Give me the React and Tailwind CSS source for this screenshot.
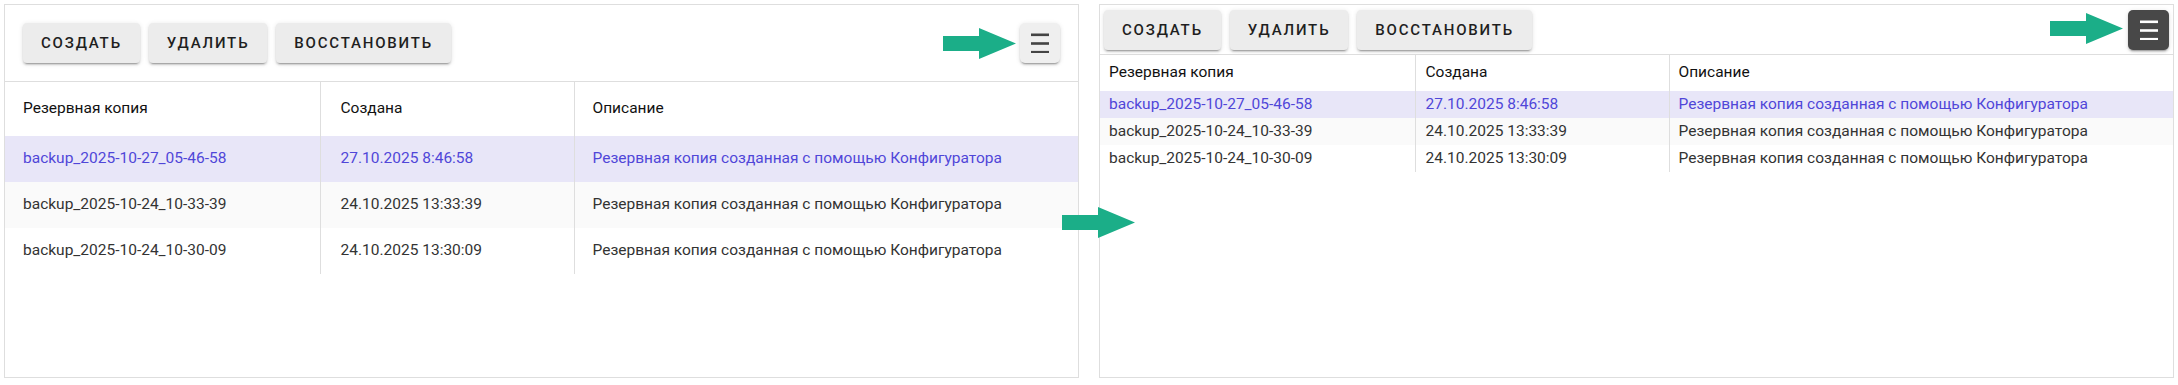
import React from 'react'

const rows = [
    { name: 'backup_2025-10-27_05-46-58', created: '27.10.2025 8:46:58', selected: true },
    { name: 'backup_2025-10-24_10-33-39', created: '24.10.2025 13:33:39' },
    { name: 'backup_2025-10-24_10-30-09', created: '24.10.2025 13:30:09' },
]

const DESC = 'Резервная копия созданная с помощью Конфигуратора'

const Arrow = ({ className }) => (
    <svg className={className} width="73" height="31" viewBox="0 0 73 31">
        <polygon points="0,8 36,8 36,0 73,15.5 36,31 36,23 0,23" fill="#1bae88" />
    </svg>
)

const MenuIcon = ({ color }) => (
    <svg width="18" height="20" viewBox="0 0 18 20">
        <rect x="0" y="0.5" width="18" height="2.6" fill={color} />
        <rect x="0" y="9.2" width="18" height="2.6" fill={color} />
        <rect x="0" y="17.9" width="18" height="2.6" fill={color} />
    </svg>
)

const Btn = ({ children }) => (
    <button className="h-[40px] px-[18px] rounded-[4px] bg-[#ececec] text-[15px] font-medium tracking-[1.8px] uppercase text-[#1f1f1f] shadow-[0_3px_1px_-2px_rgba(0,0,0,0.2),0_2px_2px_0_rgba(0,0,0,0.14),0_1px_5px_0_rgba(0,0,0,0.12)]">
        {children}
    </button>
)

const Panel = ({ compact }) => {
    const cellPad = compact ? 'px-[9px]' : 'px-[18px]'
    const midPad = compact ? 'px-[10px]' : 'px-[20px]'
    const headH = compact ? 'h-[36px]' : 'h-[54px]'
    const rowH = compact ? 'h-[27px]' : 'h-[46px]'
    return (
        <div className="w-[1075px] h-[374px] border border-[#dedede] bg-white flex flex-col">
            <div className={compact
                ? 'flex items-center justify-between pt-[5px] pb-[4px] px-[4px] border-b border-[#dedede]'
                : 'flex items-center justify-between p-[18px] border-b border-[#dedede]'}>
                <div className="flex gap-[9px]">
                    <Btn>Создать</Btn>
                    <Btn>Удалить</Btn>
                    <Btn>Восстановить</Btn>
                </div>
                {compact ? (
                    <button className="w-[41px] h-[40px] rounded-[5px] bg-[#484848] flex items-center justify-center shadow-[0_3px_1px_-2px_rgba(0,0,0,0.2),0_2px_2px_0_rgba(0,0,0,0.14),0_1px_5px_0_rgba(0,0,0,0.12)]">
                        <MenuIcon color="#ffffff" />
                    </button>
                ) : (
                    <button className="w-[40px] h-[40px] rounded-[5px] bg-[#efefef] flex items-center justify-center shadow-[0_3px_1px_-2px_rgba(0,0,0,0.2),0_2px_2px_0_rgba(0,0,0,0.14),0_1px_5px_0_rgba(0,0,0,0.12)]">
                        <MenuIcon color="#444444" />
                    </button>
                )}
            </div>
            <table className="w-full border-collapse text-[15.5px] text-left">
                <thead>
                    <tr className={headH}>
                        <th className={`w-[315px] font-normal text-[#111] border-r border-[#dedede] ${cellPad}`}>Резервная копия</th>
                        <th className={`w-[254px] font-normal text-[#111] border-r border-[#dedede] ${midPad}`}>Создана</th>
                        <th className={`font-normal text-[#111] ${cellPad}`}>Описание</th>
                    </tr>
                </thead>
                <tbody>
                    {rows.map((r, i) => (
                        <tr key={r.name} className={`${rowH} ${r.selected ? 'bg-[#e8e6f8] text-[#5046d8]' : i % 2 === 1 ? 'bg-[#fafafa] text-[#333]' : 'bg-white text-[#333]'}`}>
                            <td className={`border-r border-[#dedede] ${cellPad}`}>{r.name}</td>
                            <td className={`border-r border-[#dedede] ${midPad}`}>{r.created}</td>
                            <td className={cellPad}>{DESC}</td>
                        </tr>
                    ))}
                </tbody>
            </table>
        </div>
    )
}

export default function App() {
    return (
        <div className="relative w-[2178px] h-[385px] bg-white font-['Roboto',sans-serif]">
            <div className="flex gap-[20px] pt-[4px] pl-[4px]">
                <Panel />
                <Panel compact />
            </div>
            <Arrow className="absolute left-[943px] top-[28px]" />
            <Arrow className="absolute left-[1062px] top-[207px]" />
            <Arrow className="absolute left-[2050px] top-[13px]" />
        </div>
    )
}
